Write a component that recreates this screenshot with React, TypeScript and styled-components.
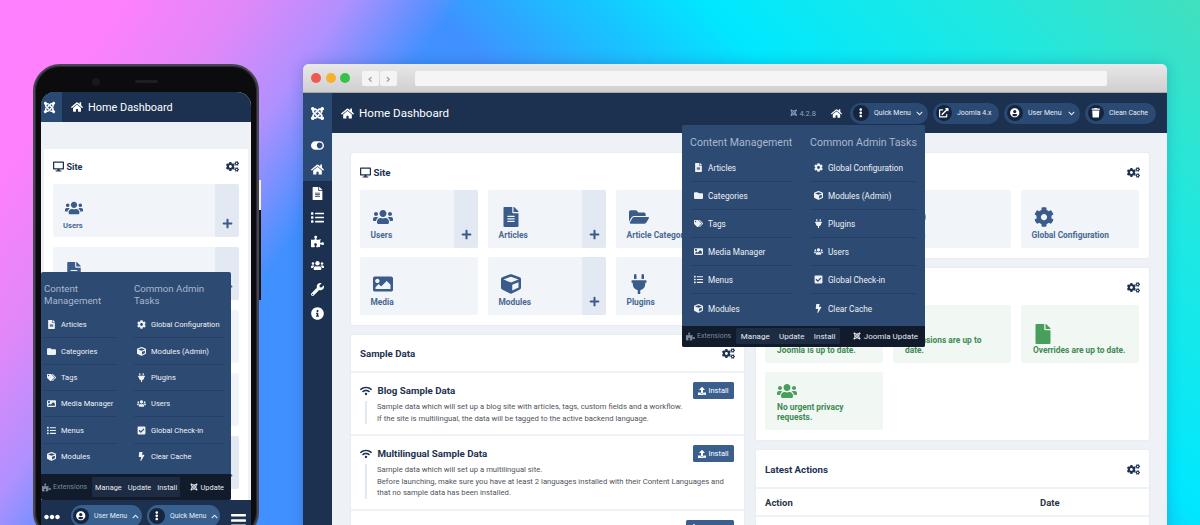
import React from "react";
import styled, { createGlobalStyle } from "styled-components";
import {
  FaBars, FaBolt, FaCheckSquare, FaChevronDown, FaChevronUp, FaCog, FaCogs, FaCube, FaDesktop, FaEllipsisH,
  FaEllipsisV, FaExternalLinkAlt, FaFile, FaFileAlt, FaFolder, FaFolderOpen, FaHome, FaImage, FaInfoCircle, FaJoomla,
  FaList, FaPlug, FaPlus, FaPuzzlePiece, FaTags, FaToggleOn, FaTrash, FaUpload, FaUserCircle,
  FaUsers, FaWifi, FaWrench,
} from "react-icons/fa";

const Global = createGlobalStyle`
  html, body { margin: 0; padding: 0; }
  body { font-family: Roboto, "Liberation Sans", sans-serif; }
  * { box-sizing: border-box; }
`;

const Stage = styled.div`
  position: relative;
  width: 1200px;
  height: 525px;
  overflow: hidden;
  background:
    linear-gradient(125deg, #ff80ff 1%, #ff80fb 7.5%, #e088f8 15.8%, #b090ff 22.2%, rgba(64, 144, 255, 0) 29.4%),
    linear-gradient(46deg, #4090ff 54.4%, #20b8ff 61.6%, #00e8ff 71%, #20e8e0 86.6%, #40e0c0 99%);
`;

/* ------- Browser window ------- */
const Browser = styled.div`
  position: absolute;
  left: 303px;
  top: 64px;
  width: 864px;
  height: 470px;
  border-radius: 6px 6px 0 0;
  overflow: hidden;
  display: flex;
  flex-direction: column;
  background: #eef1f6;
  box-shadow: 0 0 14px rgba(30, 50, 110, .25);
`;
const TitleBar = styled.div`
  height: 29px;
  flex: none;
  display: flex;
  align-items: center;
  padding: 0 60px 0 8px;
  background: linear-gradient(#e8e8e8, #cfcfcf);
  border-bottom: 1px solid #a9a9a9;
`;
const Dot = styled.span<{ $c: string }>`
  width: 10px;
  height: 10px;
  border-radius: 50%;
  margin-right: 4.5px;
  background: ${(p) => p.$c};
`;
const NavGroup = styled.div`
  display: flex;
  margin: 0 18px 0 7px;
  gap: 1px;
`;
const NavBtn = styled.span`
  width: 17px;
  height: 15px;
  background: #f4f4f4;
  color: #8a8a8a;
  display: flex;
  align-items: center;
  justify-content: center;
  font-size: 13px;
  line-height: 1;
  border-radius: 2px;
  font-family: "DejaVu Sans", sans-serif;
`;
const AddressBar = styled.div`
  flex: 1;
  height: 15px;
  background: #f5f5f5;
  border-radius: 2px;
`;
const AppBody = styled.div`
  flex: 1;
  display: flex;
  min-height: 0;
`;
const Sidebar = styled.nav`
  width: 29px;
  flex: none;
  background: #1c3150;
  display: flex;
  flex-direction: column;
`;
const LogoCell = styled.div`
  height: 40px;
  flex: none;
  background: #2b4a73;
  color: #fff;
  font-size: 15px;
  display: flex;
  align-items: center;
  justify-content: center;
`;
const SideItem = styled.div<{ $active?: boolean }>`
  height: 24px;
  flex: none;
  display: flex;
  align-items: center;
  justify-content: center;
  color: #fff;
  font-size: 13px;
  background: ${(p) => (p.$active ? "#2b4a73" : "transparent")};
`;
const Main = styled.div`
  flex: 1;
  min-width: 0;
  display: flex;
  flex-direction: column;
`;
const TopBar = styled.header`
  height: 40px;
  flex: none;
  background: #1c3150;
  color: #fff;
  display: flex;
  align-items: center;
  padding: 0 11px 0 9px;
`;
const PageTitle = styled.div`
  display: flex;
  align-items: center;
  gap: 5px;
  font-size: 11.6px;
  flex: 1;
  svg { font-size: 13px; }
`;
const Version = styled.span`
  font-size: 7.5px;
  color: #8ea0ba;
  display: flex;
  align-items: center;
  gap: 1.5px;
  margin-right: 15px;
`;
const TopHome = styled.span`
  display: flex;
  font-size: 11px;
  margin-right: 3px;
`;
const Pill = styled.div<{ $w: number }>`
  width: ${(p) => p.$w}px;
  height: 21px;
  border-radius: 11px;
  background: #2b4a73;
  color: #e8edf4;
  font-size: 7px;
  white-space: nowrap;
  display: flex;
  align-items: center;
  gap: 5px;
  margin-left: 5px;
  padding: 0 5px 0 3px;
`;
const PillIcon = styled.span`
  width: 16px;
  height: 16px;
  border-radius: 50%;
  background: #152540;
  color: #fff;
  display: flex;
  align-items: center;
  justify-content: center;
  font-size: 9.5px;
  flex: none;
`;
const PillCaret = styled.span`
  display: flex;
  font-size: 7px;
  margin-left: auto;
`;
const Content = styled.main`
  flex: 1;
  display: grid;
  grid-template-columns: 393px 393px;
  column-gap: 12px;
  padding: 20px 0 0 19px;
  align-items: start;
`;
const Column = styled.div`
  display: flex;
  flex-direction: column;
  gap: 10px;
`;
const Card = styled.section`
  background: #fff;
  border-radius: 2px;
  box-shadow: 0 0 2px rgba(30, 50, 90, .08);
`;
const CardHead = styled.div`
  height: 37px;
  display: flex;
  align-items: center;
  justify-content: space-between;
  padding: 1px 9px 0;
  color: #1c3150;
  font-size: 9.7px;
  font-weight: 700;
`;
const ListHead = styled(CardHead)`
  height: 36px;
`;
const HeadLabel = styled.span`
  display: flex;
  align-items: center;
  gap: 2.5px;
  svg { font-size: 11px; }
`;
const CogIcon = styled(FaCogs)`
  font-size: 13px;
  color: #1c3150;
`;
const TileGrid = styled.div`
  display: grid;
  grid-template-columns: repeat(3, 118px);
  grid-auto-rows: 58px;
  gap: 9px 10px;
  padding: 0 9px 10px;
`;
const Tile = styled.div<{ $ok?: boolean }>`
  position: relative;
  overflow: hidden;
  background: ${(p) => (p.$ok ? "#f1f8f3" : "#f1f5fa")};
  border-radius: 2px;
  display: flex;
  flex-direction: column;
  justify-content: flex-end;
  padding: 0 12px 8px ${(p) => (p.$ok ? "12px" : "10.5px")};
  color: ${(p) => (p.$ok ? "#3f8a54" : "#4a6892")};
  font-size: 8.4px;
  line-height: 9.5px;
  font-weight: 700;
  > svg {
    color: ${(p) => (p.$ok ? "#4a9e5c" : "#3b5b8a")};
    height: 20px;
    width: auto;
    align-self: flex-start;
    margin: 0 0 ${(p) => (p.$ok ? "2px" : "4px")} ${(p) => (p.$ok ? "0" : "2px")};
    flex: none;
  }
`;
const TileAdd = styled.span`
  position: absolute;
  top: 0;
  right: 0;
  bottom: 0;
  width: 24px;
  background: #e3e9f2;
  color: #3b5b8a;
  display: flex;
  align-items: flex-end;
  justify-content: center;
  padding-bottom: 8px;
  svg { font-size: 11px; }
`;
const SampleRow = styled.div`
  border-top: 2px solid #eef1f6;
  padding: 9px 10px 9.6px 9px;
  min-height: 60px;
`;
const SampleTop = styled.div`
  display: flex;
  justify-content: space-between;
  align-items: center;
  height: 17px;
`;
const SampleTitle = styled.div`
  display: flex;
  align-items: center;
  gap: 5.5px;
  color: #1c3150;
  font-size: 9.75px;
  font-weight: 700;
  svg { font-size: 12px; }
`;
const SampleText = styled.div`
  margin: 2px 0 0 5px;
  padding-left: 10px;
  border-left: 2px solid #e3e9f2;
  font-size: 7.7px;
  line-height: 11.7px;
  color: #4f545c;
`;
const InstallButton = styled.span<{ $w?: number }>`
  flex: none;
  margin-left: auto;
  width: ${(p) => p.$w ?? 41}px;
  height: 17px;
  background: #3a5f8f;
  color: #fff;
  border-radius: 1.5px;
  font-size: 7.5px;
  display: flex;
  align-items: center;
  justify-content: center;
  gap: 2px;
  svg { font-size: 8px; }
`;
const TableRow = styled.div`
  border-top: 2px solid #eef1f6;
  height: 28px;
  display: grid;
  grid-template-columns: 275px 1fr;
  align-items: center;
  padding: 0 9px;
  font-size: 9.5px;
  font-weight: 700;
  color: #2a3547;
`;

/* ------- Quick menu popup, used in both frames ------- */
const Popup = styled.div<{ $l: number; $t: number; $w: number }>`
  position: absolute;
  left: ${(p) => p.$l}px;
  top: ${(p) => p.$t}px;
  width: ${(p) => p.$w}px;
  background: #2d4a72;
  border-radius: 2px;
  overflow: hidden;
  z-index: 5;
`;
const PopupCols = styled.div<{ $phone?: boolean }>`
  display: grid;
  grid-template-columns: ${(p) => (p.$phone ? "73px 90px" : "102px 106px")};
  column-gap: ${(p) => (p.$phone ? "17px" : "18px")};
  padding: ${(p) => (p.$phone ? "11px 0 4px 3px" : "12px 0 3px 8px")};
`;
const PopupHead = styled.div<{ $phone?: boolean }>`
  color: #a9b8cd;
  font-size: ${(p) => (p.$phone ? "9.7px" : "10.6px")};
  line-height: 12px;
  height: ${(p) => (p.$phone ? "29px" : "17px")};
  white-space: ${(p) => (p.$phone ? "normal" : "nowrap")};
`;
const PopupItem = styled.div<{ $phone?: boolean; $last?: boolean }>`
  height: ${(p) => (p.$phone ? "26.35px" : "28.1px")};
  display: flex;
  align-items: center;
  color: #edf1f6;
  font-size: ${(p) => (p.$phone ? "7.55px" : "8.25px")};
  gap: 4px;
  padding-left: ${(p) => (p.$phone ? "2px" : "3px")};
  border-bottom: ${(p) => (p.$last ? "none" : "1px solid #24406a")};
  white-space: nowrap;
`;
const ItemIcon = styled.span`
  width: 11px;
  display: flex;
  justify-content: center;
  font-size: 9px;
  flex: none;
`;
const PopupFoot = styled.div<{ $phone?: boolean }>`
  height: ${(p) => (p.$phone ? "26px" : "21px")};
  background: #111b2c;
  display: flex;
  align-items: center;
  color: #e6ebf2;
  font-size: ${(p) => (p.$phone ? "7.4px" : "8px")};
  padding: 0 2px 0 ${(p) => (p.$phone ? "1px" : "4px")};
`;
const FootLabel = styled.span`
  display: flex;
  align-items: center;
  gap: 2px;
  color: #7b899c;
  font-size: 7px;
  svg { font-size: 9px; }
`;
const FootTabs = styled.div<{ $phone?: boolean }>`
  display: flex;
  align-items: center;
  height: ${(p) => (p.$phone ? "20px" : "16px")};
  margin-left: 5px;
  background: #1d2c42;
  border-radius: 1.5px;
  span { padding: 0 ${(p) => (p.$phone ? "3px" : "4.7px")}; }
`;
const FootUpdate = styled.span`
  margin-left: auto;
  padding-right: 5px;
  display: flex;
  align-items: center;
  gap: 3px;
  svg { font-size: 8px; }
`;

/* ------- Phone ------- */
const Phone = styled.div`
  position: absolute;
  left: 33px;
  top: 64px;
  width: 226px;
  height: 475px;
  border-radius: 27px;
  background: #0c0c0e;
  border: 2px solid #4a4553;
  box-shadow: 0 0 0 1px #2a2a33 inset;
  padding: 26px 6px 0;
  display: flex;
  flex-direction: column;
`;
const SideKey = styled.span<{ $c: string; $t: number; $h: number }>`
  position: absolute;
  right: -4px;
  top: ${(p) => p.$t}px;
  width: 2px;
  height: ${(p) => p.$h}px;
  background: ${(p) => p.$c};
`;
const Camera = styled.span`
  position: absolute;
  left: 57px;
  top: 12px;
  width: 8px;
  height: 8px;
  border-radius: 50%;
  background: #18181c;
`;
const Speaker = styled.span`
  position: absolute;
  left: 100px;
  top: 14px;
  width: 23px;
  height: 3px;
  border-radius: 2px;
  background: #1e1e21;
`;
const Screen = styled.div`
  flex: none;
  width: 210px;
  height: 433px;
  border-radius: 14px 14px 0 0;
  overflow: hidden;
  background: #eef1f6;
  display: flex;
  flex-direction: column;
`;
const PhoneHead = styled.div`
  height: 30px;
  flex: none;
  background: #1c3150;
  color: #fff;
  display: flex;
  align-items: center;
`;
const PhoneLogo = styled.div`
  width: 21px;
  height: 30px;
  background: #2b4a73;
  display: flex;
  align-items: center;
  font-size: 13px;
  padding-left: 2px;
  margin-right: 9px;
`;
const PhoneTitle = styled.div`
  display: flex;
  align-items: center;
  gap: 5px;
  font-size: 10.9px;
  svg { font-size: 12px; }
`;
const PhoneCard = styled.section`
  margin: 27px 3px 0;
  background: #fff;
  flex: 1;
  min-height: 0;
  overflow: hidden;
`;
const PhoneCardHead = styled(CardHead)`
  height: 35px;
  padding: 0 9px;
  font-size: 9px;
`;
const PhoneTiles = styled.div`
  display: flex;
  flex-direction: column;
  gap: 10px;
  padding: 0 9px;
`;
const PhoneTile = styled(Tile)`
  height: 53px;
  flex: none;
  font-size: 7.6px;
  padding: 0 8px 7px 10px;
  > svg { height: 18px; margin-bottom: 4px; }
`;
const PhoneFoot = styled.div`
  height: 25px;
  flex: none;
  background: #1c3150;
  display: flex;
  align-items: center;
  color: #fff;
  padding: 0 4px 0 3px;
`;
const Dots = styled.span`
  display: flex;
  font-size: 16px;
  margin: 8px 11px 0 0;
`;
const PhonePill = styled(Pill)`
  height: 22px;
  margin: 7px 5px 0 0;
  font-size: 6.9px;
  padding: 0 6px 0 2px;
  background: #38608f;
`;
const Burger = styled.span`
  display: flex;
  font-size: 17px;
  margin: 15px 0 0 auto;
`;

const menuLeft: [React.ReactNode, string][] = [
  [<FaFileAlt />, "Articles"], [<FaFolder />, "Categories"], [<FaTags />, "Tags"],
  [<FaImage />, "Media Manager"], [<FaList />, "Menus"], [<FaCube />, "Modules"],
];
const menuRight: [React.ReactNode, string][] = [
  [<FaCog />, "Global Configuration"], [<FaCube />, "Modules (Admin)"], [<FaPlug />, "Plugins"],
  [<FaUsers />, "Users"], [<FaCheckSquare />, "Global Check-in"], [<FaBolt />, "Clear Cache"],
];

function QuickMenu({ phone, l, t, w, update }: { phone?: boolean; l: number; t: number; w: number; update: string }) {
  const col = (title: string, items: [React.ReactNode, string][]) => (
    <div>
      <PopupHead $phone={phone}>{title}</PopupHead>
      {items.map(([icon, label], i) => (
        <PopupItem key={label} $phone={phone} $last={i === items.length - 1}>
          <ItemIcon>{icon}</ItemIcon>
          {label}
        </PopupItem>
      ))}
    </div>
  );
  return (
    <Popup $l={l} $t={t} $w={w}>
      <PopupCols $phone={phone}>
        {col("Content Management", menuLeft)}
        {col("Common Admin Tasks", menuRight)}
      </PopupCols>
      <PopupFoot $phone={phone}>
        <FootLabel><FaPuzzlePiece /> Extensions</FootLabel>
        <FootTabs $phone={phone}><span>Manage</span><span>Update</span><span>Install</span></FootTabs>
        <FootUpdate><FaJoomla /> {update}</FootUpdate>
      </PopupFoot>
    </Popup>
  );
}

export default function App() {
  return (
    <Stage>
      <Global />
      <Browser>
        <TitleBar>
          <Dot $c="#ee5a52" /><Dot $c="#f5b22e" /><Dot $c="#36c148" />
          <NavGroup><NavBtn>‹</NavBtn><NavBtn>›</NavBtn></NavGroup>
          <AddressBar />
        </TitleBar>
        <AppBody>
          <Sidebar>
            <LogoCell><FaJoomla /></LogoCell>
            <SideItem $active><FaToggleOn /></SideItem>
            <SideItem $active><FaHome /></SideItem>
            <SideItem><FaFileAlt /></SideItem>
            <SideItem><FaList /></SideItem>
            <SideItem><FaPuzzlePiece /></SideItem>
            <SideItem><FaUsers /></SideItem>
            <SideItem><FaWrench /></SideItem>
            <SideItem><FaInfoCircle /></SideItem>
          </Sidebar>
          <Main>
            <TopBar>
              <PageTitle><FaHome /> Home Dashboard</PageTitle>
              <Version><FaJoomla /> 4.2.8</Version>
              <TopHome><FaHome /></TopHome>
              <Pill $w={78}><PillIcon><FaEllipsisV /></PillIcon> Quick Menu <PillCaret><FaChevronDown /></PillCaret></Pill>
              <Pill $w={66}><PillIcon><FaExternalLinkAlt /></PillIcon> Joomla 4.x</Pill>
              <Pill $w={76}><PillIcon><FaUserCircle /></PillIcon> User Menu <PillCaret><FaChevronDown /></PillCaret></Pill>
              <Pill $w={71}><PillIcon><FaTrash /></PillIcon> Clean Cache</Pill>
            </TopBar>
            <Content>
              <Column>
                <Card>
                  <CardHead><HeadLabel><FaDesktop /> Site</HeadLabel></CardHead>
                  <TileGrid>
                    <Tile><FaUsers />Users<TileAdd><FaPlus /></TileAdd></Tile>
                    <Tile><FaFileAlt />Articles<TileAdd><FaPlus /></TileAdd></Tile>
                    <Tile><FaFolderOpen />Article Categories</Tile>
                    <Tile><FaImage />Media</Tile>
                    <Tile><FaCube />Modules<TileAdd><FaPlus /></TileAdd></Tile>
                    <Tile><FaPlug />Plugins</Tile>
                  </TileGrid>
                </Card>
                <Card>
                  <ListHead>Sample Data <CogIcon /></ListHead>
                  <SampleRow>
                    <SampleTop>
                      <SampleTitle><FaWifi /> Blog Sample Data</SampleTitle>
                      <InstallButton><FaUpload /> Install</InstallButton>
                    </SampleTop>
                    <SampleText>
                      Sample data which will set up a blog site with articles, tags, custom fields and a workflow.<br />
                      If the site is multilingual, the data will be tagged to the active backend language.
                    </SampleText>
                  </SampleRow>
                  <SampleRow>
                    <SampleTop>
                      <SampleTitle><FaWifi /> Multilingual Sample Data</SampleTitle>
                      <InstallButton><FaUpload /> Install</InstallButton>
                    </SampleTop>
                    <SampleText>
                      Sample data which will set up a multilingual site.<br />
                      Before launching, make sure you have at least 2 languages installed with their Content Languages and
                      that no sample data has been installed.
                    </SampleText>
                  </SampleRow>
                  <SampleRow>
                    <SampleTop>
                      <InstallButton $w={48}><FaUpload /> Uninstall</InstallButton>
                    </SampleTop>
                  </SampleRow>
                </Card>
              </Column>
              <Column>
                <Card>
                  <CardHead>System <CogIcon /></CardHead>
                  <TileGrid>
                    <Tile><FaCheckSquare />Global Check-in</Tile>
                    <Tile><FaUserCircle />Users</Tile>
                    <Tile><FaCog />Global Configuration</Tile>
                  </TileGrid>
                </Card>
                <Card>
                  <CardHead>Notifications <CogIcon /></CardHead>
                  <TileGrid>
                    <Tile $ok><FaJoomla />Joomla is up to date.</Tile>
                    <Tile $ok><FaPuzzlePiece />Extensions are up to date.</Tile>
                    <Tile $ok><FaFile />Overrides are up to date.</Tile>
                    <Tile $ok><FaUsers />No urgent privacy requests.</Tile>
                  </TileGrid>
                </Card>
                <Card>
                  <CardHead>Latest Actions <CogIcon /></CardHead>
                  <TableRow><span>Action</span><span>Date</span></TableRow>
                  <TableRow />
                </Card>
              </Column>
            </Content>
          </Main>
        </AppBody>
        <QuickMenu l={379} t={61} w={243} update="Joomla Update" />
      </Browser>
      <Phone>
        <Camera /><Speaker />
        <SideKey $c="#f1f1f1" $t={114} $h={30} />
        <SideKey $c="#12141c" $t={144} $h={90} />
        <Screen>
          <PhoneHead>
            <PhoneLogo><FaJoomla /></PhoneLogo>
            <PhoneTitle><FaHome /> Home Dashboard</PhoneTitle>
          </PhoneHead>
          <PhoneCard>
            <PhoneCardHead><HeadLabel><FaDesktop /> Site</HeadLabel><CogIcon /></PhoneCardHead>
            <PhoneTiles>
              <PhoneTile><FaUsers />Users<TileAdd><FaPlus /></TileAdd></PhoneTile>
              <PhoneTile><FaFileAlt />Articles<TileAdd><FaPlus /></TileAdd></PhoneTile>
              <PhoneTile><FaFolderOpen />Article Categories</PhoneTile>
              <PhoneTile><FaImage />Media</PhoneTile>
              <PhoneTile><FaCube />Modules<TileAdd><FaPlus /></TileAdd></PhoneTile>
            </PhoneTiles>
          </PhoneCard>
          <PhoneFoot>
            <Dots><FaEllipsisH /></Dots>
            <PhonePill $w={71}><PillIcon><FaUserCircle /></PillIcon> User Menu <PillCaret><FaChevronUp /></PillCaret></PhonePill>
            <PhonePill $w={73}><PillIcon><FaEllipsisV /></PillIcon> Quick Menu <PillCaret><FaChevronUp /></PillCaret></PhonePill>
            <Burger><FaBars /></Burger>
          </PhoneFoot>
        </Screen>
        <QuickMenu phone l={6} t={206} w={190} update="Update" />
      </Phone>
    </Stage>
  );
}
